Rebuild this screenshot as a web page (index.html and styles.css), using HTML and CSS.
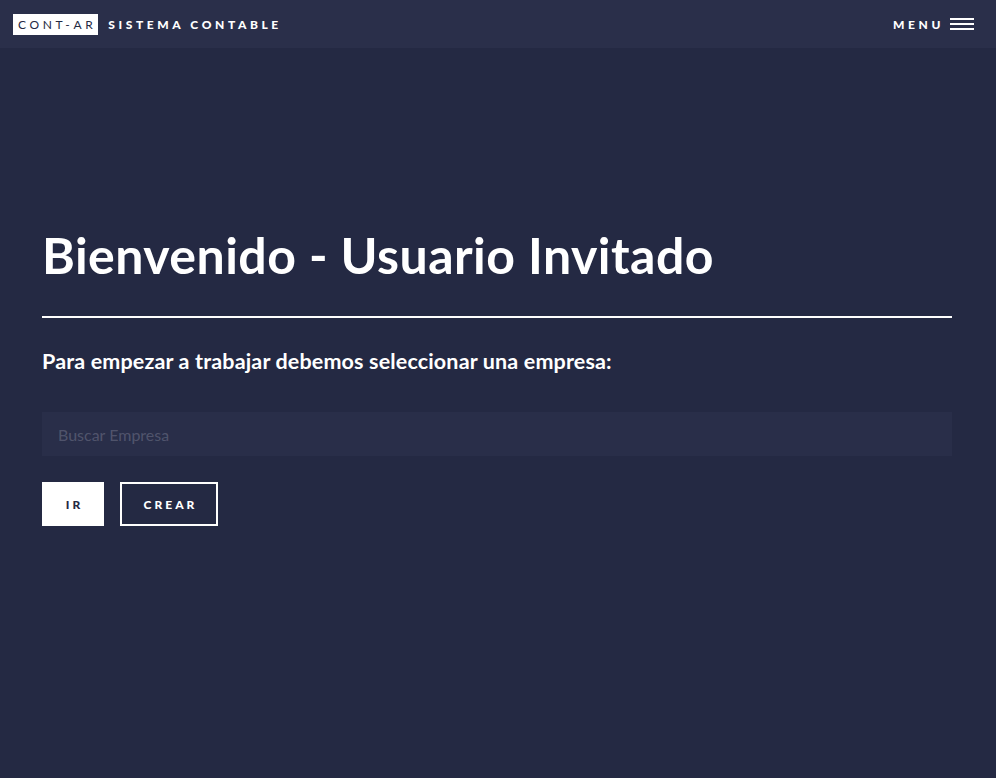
FILE: index.html
```html
<!DOCTYPE html>
<html lang="es">
<head>
<meta charset="utf-8">
<title>CONT-AR Sistema Contable</title>
<link rel="stylesheet" href="styles.css">
</head>
<body>
<header class="header">
  <a class="logo" href="#"><span class="logo-box">CONT-AR</span><span class="logo-text">SISTEMA CONTABLE</span></a>
  <a class="menu" href="#"><span class="menu-label">MENU</span><span class="burger"><i></i><i></i><i></i></span></a>
</header>
<main class="main">
  <h1 class="title">Bienvenido - Usuario Invitado</h1>
  <hr class="rule">
  <h3 class="subtitle">Para empezar a trabajar debemos seleccionar una empresa:</h3>
  <input class="search" type="text" placeholder="Buscar Empresa">
  <div class="actions">
    <button class="btn btn-primary">IR</button>
    <button class="btn btn-outline">CREAR</button>
  </div>
</main>
</body>
</html>
```
FILE: styles.css
```css
* { box-sizing: border-box; }
html, body { margin: 0; padding: 0; }
body {
  background: #242943;
  color: #ffffff;
  font-family: Lato, "Open Sans", sans-serif;
  min-height: 778px;
}
.header {
  height: 48px;
  background: #2a2f4a;
  display: flex;
  align-items: center;
  justify-content: space-between;
  padding: 0 22px 0 13px;
}
.logo {
  display: flex;
  align-items: center;
  text-decoration: none;
  color: #fff;
  font-size: 12px;
  font-weight: 900;
  letter-spacing: 0.3em;
}
.logo-box {
  background: #fff;
  color: #242943;
  font-weight: 400;
  height: 21px;
  line-height: 21px;
  padding: 0 2px 0 5px;
  margin-right: 10px;
}
.logo-text { color: #fff; }
.menu {
  display: flex;
  align-items: center;
  text-decoration: none;
  color: #fff;
  font-size: 12px;
  font-weight: 900;
  letter-spacing: 0.3em;
}
.menu-label { margin-right: 6px; }
.burger { display: flex; flex-direction: column; gap: 3px; width: 24px; }
.burger i { display: block; height: 2px; background: #fff; }
.main {
  padding: 175px 44px 0 42px;
}
.title {
  margin: 0;
  font-size: 50px;
  line-height: 64px;
  font-weight: 700;
  letter-spacing: 0.45px;
}
.rule {
  margin: 29px 0 0 0;
  border: 0;
  height: 2px;
  background: #fff;
}
.subtitle {
  margin: 28px 0 0 0;
  font-size: 21.5px;
  line-height: 30px;
  font-weight: 700;
  letter-spacing: 0.15px;
}
.search {
  display: block;
  width: 100%;
  height: 44px;
  margin-top: 36px;
  border: 0;
  background: rgba(212, 212, 255, 0.035);
  color: #fff;
  font-family: inherit;
  font-size: 16px;
  padding: 0 16px;
  outline: none;
}
.search::placeholder { color: rgba(244, 244, 255, 0.2); }
.actions {
  display: flex;
  gap: 16px;
  margin-top: 26px;
}
.btn {
  height: 44px;
  border: 0;
  font-family: inherit;
  font-size: 12px;
  font-weight: 900;
  letter-spacing: 0.25em;
  padding: 0 0 0 3px;
  cursor: pointer;
}
.btn-primary {
  width: 62px;
  background: #fff;
  color: #242943;
}
.btn-outline {
  width: 98px;
  background: transparent;
  color: #fff;
  box-shadow: inset 0 0 0 2px #fff;
}
```
